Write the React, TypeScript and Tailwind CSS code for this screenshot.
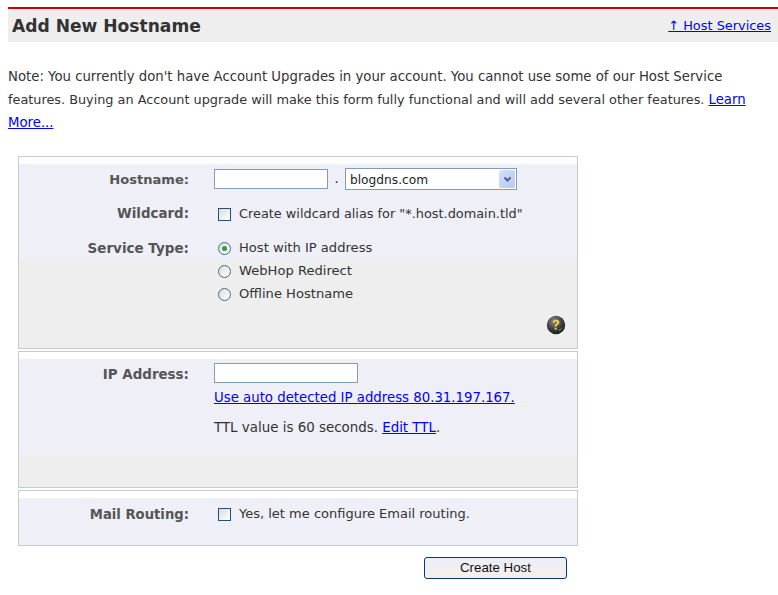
const F = "font-['DejaVu_Sans',sans-serif]";

function Check() {
  return <input type="checkbox" readOnly className="appearance-none block w-[13px] h-[13px] m-0 border border-[#1c5180] bg-[linear-gradient(135deg,#dcdcd7,#ffffff)] shrink-0" />;
}

function Radio({ on }: { on?: boolean }) {
  return (
    <span className="relative block w-[13px] h-[13px] shrink-0 rounded-full border border-[#3f6a8f] bg-[linear-gradient(135deg,#dcdcd7,#ffffff)]">
      {on && <span className="absolute left-[3px] top-[3px] w-[5px] h-[5px] rounded-full bg-[#2f9e3f]" />}
    </span>
  );
}

function Label({ children, size }: { children: React.ReactNode; size: string }) {
  return <div className={`w-[170px] text-right font-bold text-[#555555] leading-[20px] shrink-0 ${size}`}>{children}</div>;
}

function HelpIcon() {
  return (
    <svg width="20" height="20" viewBox="0 0 20 20">
      <defs>
        <radialGradient id="hg" cx="40%" cy="30%" r="75%">
          <stop offset="0%" stopColor="#8a8a8a" />
          <stop offset="60%" stopColor="#3c3c3c" />
          <stop offset="100%" stopColor="#1a1a1a" />
        </radialGradient>
      </defs>
      <circle cx="10" cy="10" r="9.2" fill="url(#hg)" />
      <path d="M6.6 7.4c.3-1.9 1.7-2.7 3.5-2.7 2 0 3.3 1 3.3 2.6 0 1.3-.8 1.9-1.7 2.5-.8.5-1.1.9-1.1 1.8H8.7c0-1.5.5-2.2 1.4-2.8.7-.5 1.1-.8 1.1-1.4 0-.6-.5-1-1.2-1-.8 0-1.3.4-1.5 1.2z" fill="#f2d24a" />
      <rect x="8.7" y="12.7" width="2" height="2" fill="#f2d24a" />
      <path d="M12.5 14.5l1.5 1 2-2.5" fill="none" stroke="#5aa83a" strokeWidth="1" />
    </svg>
  );
}

export default function App() {
  return (
    <div className={`${F} bg-white w-[778px] h-[595px] overflow-hidden text-[13.27px] text-[#333333] pt-[7px] pl-[8px]`}>
      <div className="border-t-2 border-[#cc0000] bg-[#eeeeee] h-[35px] flex justify-between pl-[4px] pr-[7px]">
        <h1 className="text-[17.1px] font-bold text-[#333333] leading-[35px]">Add New Hostname</h1>
        <a href="#" className="text-[#0000ff] underline text-[12.9px] leading-[34px]">↑ Host Services</a>
      </div>

      <div className="mt-[23px] w-[745px] leading-[23px]">
        <p>Note: You currently don't have Account Upgrades in your account. You cannot use some of our Host Service</p>
        <p className="text-[12.83px]">features. Buying an Account upgrade will make this form fully functional and will add several other features.{" "}
        <a href="#" className="text-[#0000ff] underline text-[13.27px]">Learn</a></p>
        <p><a href="#" className="text-[#0000ff] underline">More...</a></p>
      </div>

      <div className="ml-[10px] w-[560px] mt-[22px]">
        <section className="h-[193px] border border-[#c5cccc] bg-[linear-gradient(#ffffff_7px,#eeeff7_7px,#eeeff7_103px,#eeeeee_103px)] pt-[12px] flex flex-col">
          <div className="flex h-[20px] items-center">
            <div className="pt-[2px]"><Label size="text-[13.05px]">Hostname:</Label></div>
            <div className="ml-[25px] flex items-center">
              <input readOnly className="w-[114px] h-[20px] border border-[#7f9db9] bg-white" />
              <span className="w-[17px] text-center">.</span>
              <div className="relative w-[172px] h-[22px] border border-[#7f9db9] bg-white flex items-center pl-[4px] pt-[2px] text-[12.2px] text-[#222222]">
                blogdns.com
                <span className="absolute right-[1px] top-[1px] w-[16px] h-[18px] rounded-[2px] bg-[linear-gradient(135deg,#d5e1fb,#b4c8f4)] flex items-center justify-center">
                  <svg width="9" height="7" viewBox="0 0 9 7"><path d="M1.5 1.5L4.5 4.5L7.5 1.5" fill="none" stroke="#4d6185" strokeWidth="2" /></svg>
                </span>
              </div>
            </div>
          </div>
          <div className="flex mt-[15px] h-[20px] items-center">
            <Label size="text-[13.4px]">Wildcard:</Label>
            <div className="ml-[29px] flex items-center gap-[8px]"><Check /><span className="text-[12.87px]">Create wildcard alias for "*.host.domain.tld"</span></div>
          </div>
          <div className="flex mt-[14px]">
            <Label size="text-[13.5px]">Service Type:</Label>
            <div className="ml-[29px] flex flex-col gap-[3px]">
              {[["Host with IP address", true], ["WebHop Redirect", false], ["Offline Hostname", false]].map(([t, on]) => (
                <div key={t as string} className="flex items-center gap-[8px] h-[20px]"><Radio on={on as boolean} /><span className="text-[13.1px]">{t}</span></div>
              ))}
            </div>
          </div>
          <div className="flex justify-end pr-[11px] mt-[11px]"><HelpIcon /></div>
        </section>

        <section className="mt-[2px] h-[137px] border border-[#c5cccc] bg-[linear-gradient(#ffffff_7px,#eeeff7_7px,#eeeff7_104px,#eeeeee_104px)] pt-[11px] flex">
          <div className="pt-[2px]"><Label size="text-[13.45px]">IP Address:</Label></div>
          <div className="ml-[25px] flex flex-col">
            <input readOnly className="w-[144px] h-[20px] border border-[#7f9db9] bg-white" />
            <a href="#" className="text-[#0000ff] underline text-[13.3px] leading-[20px] mt-[5px]">Use auto detected IP address 80.31.197.167.</a>
            <div className="mt-[10px] leading-[20px] text-[13.4px]">TTL value is 60 seconds. <a href="#" className="text-[#0000ff] underline">Edit TTL</a>.</div>
          </div>
        </section>

        <section className="mt-[2px] h-[56px] border border-[#c5cccc] bg-[linear-gradient(#ffffff_7px,#eeeff7_7px)] pt-[13px] flex items-start">
          <div className="pt-[1px]"><Label size="text-[13.2px]">Mail Routing:</Label></div>
          <div className="ml-[29px] flex items-center gap-[8px] h-[20px]"><Check /><span className="text-[13px]">Yes, let me configure Email routing.</span></div>
        </section>

        <div className="flex justify-end pr-[11px] mt-[11px]">
          <button className="w-[143px] h-[22px] rounded-[3px] border border-[#003c74] bg-[linear-gradient(#eeeef6_50%,#f5eeee_50%)] font-['Liberation_Sans',sans-serif] text-[13.3px] text-[#111111]">Create Host</button>
        </div>
      </div>
    </div>
  );
}
